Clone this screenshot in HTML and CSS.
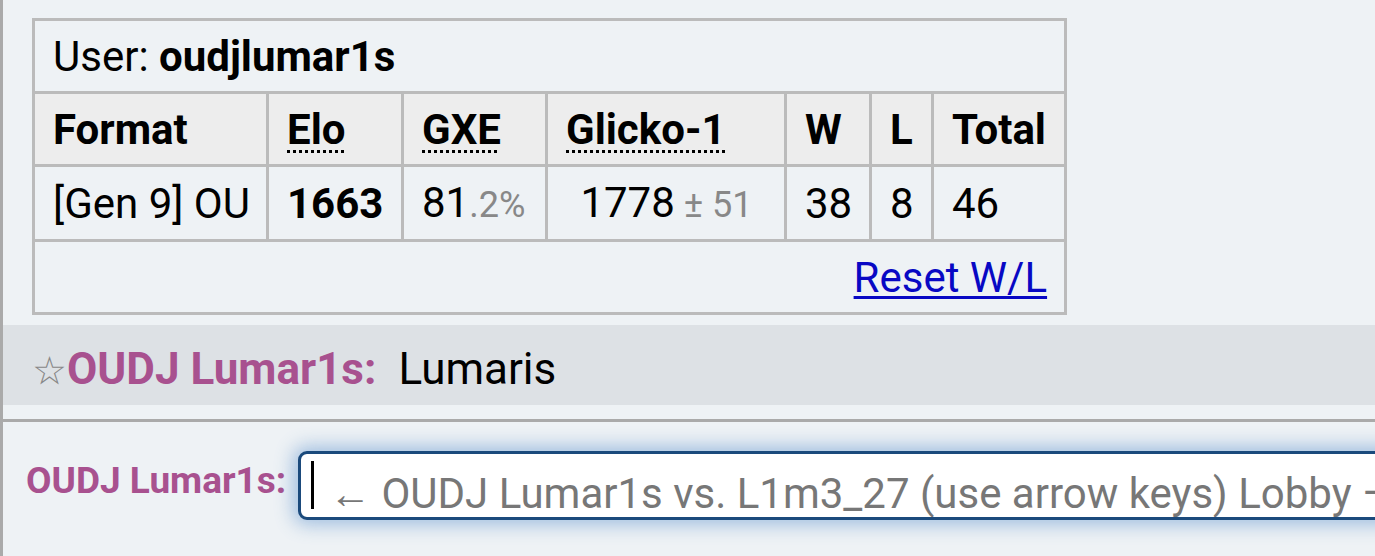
FILE: index.html
```html
<!DOCTYPE html>
<html lang="en">
<head>
    <meta charset="UTF-8">
    <meta name="viewport" content="width=device-width, initial-scale=1.0">
    <title>Ladder - oudjlumar1s</title>
    <link rel="stylesheet" href="styles.css">
</head>
<body>
    <div class="room">
        <div class="log">
            <div class="ladder">
                <table>
                    <colgroup>
                        <col class="col-format">
                        <col class="col-elo">
                        <col class="col-gxe">
                        <col class="col-glicko">
                        <col class="col-w">
                        <col class="col-l">
                        <col class="col-total">
                    </colgroup>
                    <tr>
                        <td colspan="7">User: <strong>oudjlumar1s</strong></td>
                    </tr>
                    <tr>
                        <th>Format</th>
                        <th><abbr title="Elo rating">Elo</abbr></th>
                        <th><abbr title="user's percentage chance of winning a random battle">GXE</abbr></th>
                        <th><abbr title="Glicko-1 rating system: rating±deviation">Glicko-1</abbr></th>
                        <th>W</th>
                        <th>L</th>
                        <th>Total</th>
                    </tr>
                    <tr>
                        <td>[Gen 9] OU</td>
                        <td><strong>1663</strong></td>
                        <td>81<small>.2%</small></td>
                        <td class="center">1778<small> ± 51</small></td>
                        <td>38</td>
                        <td>8</td>
                        <td>46</td>
                    </tr>
                    <tr>
                        <td colspan="7" class="right"><a href="#">Reset W/L</a></td>
                    </tr>
                </table>
            </div>
            <div class="chat">
                <span class="star">☆</span><strong class="name">OUDJ Lumar1s:</strong><span class="msg">Lumaris</span>
            </div>
        </div>
        <form class="composer">
            <label class="me" for="message">OUDJ Lumar1s:</label>
            <div class="textbox">
                <span class="caret"></span>
                <input type="text" id="message" placeholder="← OUDJ Lumar1s vs. L1m3_27 (use arrow keys) Lobby – Help">
            </div>
        </form>
    </div>
</body>
</html>
```

FILE: styles.css
```css
html, body {
    margin: 0;
    height: 100%;
    overflow: hidden;
}
body {
    font-family: Roboto, "Liberation Sans", sans-serif;
    background-color: #eef2f5;
    color: #000;
}
.room {
    border-left: 3px solid #aaa;
    height: 100%;
}
.log {
    border-bottom: 3px solid #aaa;
    padding: 18px 0 14px;
}
.ladder {
    padding-left: 29px;
    margin-bottom: 10px;
}
table {
    table-layout: fixed;
    width: 1035px;
    border-collapse: collapse;
    font-size: 42px;
    line-height: 49px;
}
.col-format { width: 234px; }
.col-elo { width: 135px; }
.col-gxe { width: 144px; }
.col-glicko { width: 239px; }
.col-w { width: 85px; }
.col-l { width: 62px; }
.col-total { width: 133px; }
th, td {
    border: 3px solid #bbb;
    padding: 11px 17px 10px 18px;
    text-align: left;
    white-space: nowrap;
}
th {
    background-color: #ededed;
}
abbr {
    text-decoration: underline dotted;
    text-underline-offset: 6px;
    text-decoration-thickness: 3px;
}
small {
    font-size: 0.86em;
    color: #888;
}
.center {
    text-align: center;
}
.right {
    text-align: right;
}
a {
    color: #0808c4;
    text-decoration-thickness: 3px;
    text-underline-offset: 4px;
}
.chat {
    background-color: #dde1e5;
    padding: 19px 29px 9px;
    font-size: 44px;
    line-height: 51px;
    white-space: nowrap;
}
.star {
    color: #888;
    font-family: "DejaVu Sans", sans-serif;
    font-size: 39px;
}
.name {
    color: #a8518f;
    margin-right: 22px;
}
.composer {
    display: flex;
    align-items: center;
    padding: 29px 0 0 23px;
}
.me {
    flex: none;
    width: 272px;
    color: #a8518f;
    font-weight: bold;
    font-size: 37px;
    white-space: nowrap;
    margin-top: -10px;
}
.textbox {
    position: relative;
    flex: none;
}
.textbox input {
    box-sizing: border-box;
    width: 1200px;
    height: 69px;
    padding: 16px 0 0 28px;
    border: 3px solid #1b4a7c;
    border-radius: 9px;
    background: #fff;
    box-shadow: 0 0 18px 5px rgba(70, 130, 200, 0.45);
    font-family: Roboto, sans-serif;
    font-size: 42px;
    outline: none;
}
.textbox input::placeholder {
    color: #777;
}
.caret {
    position: absolute;
    left: 13px;
    top: 10px;
    width: 3px;
    height: 48px;
    background: #000;
    z-index: 1;
}
```
